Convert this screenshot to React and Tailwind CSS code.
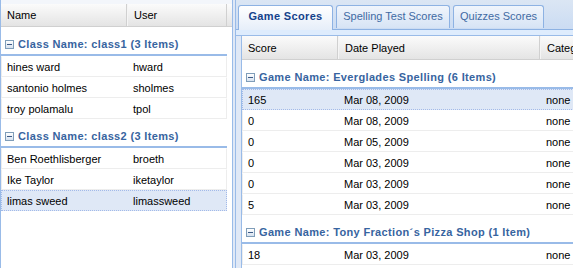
import React from "react";

function Sprite() {
  return (
    <span className="inline-flex h-[9px] w-[9px] items-center justify-center border border-[#7f9db9] bg-gradient-to-b from-white to-[#d6e1ef]">
      <span className="h-[1px] w-[5px] bg-[#3c5a86]" />
    </span>
  );
}

function GroupHeader({ label }) {
  return (
    <div className="pt-[6px] border-b-2 border-[#99bbe8]">
      <div className="flex h-[21px] items-center pl-[4px] pt-[1px]">
        <Sprite />
        <span className="ml-[4px] text-[11px] font-bold tracking-[0.35px] text-[#3764a0] whitespace-nowrap">
          {label}
        </span>
      </div>
    </div>
  );
}

function Row({ cells, widths, selected }) {
  return (
    <div
      className={
        "flex h-[21px] items-center border whitespace-nowrap pt-[2px] " +
        (selected
          ? "bg-[#dfe8f6] border-dotted border-[#a3bae9]"
          : "bg-white border-[#ededed] border-t-white")
      }
    >
      {cells.map((c, i) => (
        <div key={i} className={`pl-[5px] shrink-0 overflow-hidden ${widths[i]}`}>
          {c}
        </div>
      ))}
    </div>
  );
}

function HeaderCell({ children, className }) {
  return (
    <div
      className={`flex h-full items-center pl-[6px] pt-[1px] border-r border-[#d0d0d0] border-l border-l-[#f5f5f5] shrink-0 overflow-hidden whitespace-nowrap ${className}`}
    >
      {children}
    </div>
  );
}

export default function App() {
  const leftW = ["w-[126px]", "w-[98px]"];
  const rightW = ["w-[96px]", "w-[202px]", "w-[60px]"];
  return (
    <div className="flex h-[268px] w-[573px] overflow-hidden bg-[#dfe8f6] font-['Liberation_Sans',Arial,sans-serif] text-[11px] text-black">
      {/* Left panel */}
      <div className="flex w-[233px] shrink-0 flex-col border-x border-[#99bbe8] bg-white">
        <div className="h-[4px] bg-[#f3f6fb]" />
        <div className="flex h-[23px] border-b border-[#d0d0d0] bg-gradient-to-b from-[#fbfbfb] to-[#e4e4e4]">
          <HeaderCell className="w-[126px] border-l-0">Name</HeaderCell>
          <HeaderCell className="w-[100px]">User</HeaderCell>
        </div>
        <div className="w-[226px]">
          <GroupHeader label="Class Name: class1 (3 Items)" />
          <Row cells={["hines ward", "hward"]} widths={leftW} />
          <Row cells={["santonio holmes", "sholmes"]} widths={leftW} />
          <Row cells={["troy polamalu", "tpol"]} widths={leftW} />
          <GroupHeader label="Class Name: class2 (3 Items)" />
          <Row cells={["Ben Roethlisberger", "broeth"]} widths={leftW} />
          <Row cells={["Ike Taylor", "iketaylor"]} widths={leftW} />
          <Row cells={["limas sweed", "limassweed"]} widths={leftW} selected />
        </div>
      </div>

      {/* Right panel */}
      <div className="ml-[2px] flex min-w-0 flex-1 flex-col border-l border-[#99bbe8]">
        <div className="flex h-[30px] items-end gap-[3px] border-b border-[#8db2e3] bg-gradient-to-b from-[#dbe6f4] to-[#cbdcf3] pl-[2px]">
          <div className="-mb-[1px] flex h-[25px] w-[95px] items-start justify-center pt-[2px] rounded-t-[3px] border border-b-0 border-[#8db2e3] bg-gradient-to-b from-white to-[#e6eef9] font-bold tracking-[0.35px] text-[#15428b]">
            Game Scores
          </div>
          <div className="mb-[1px] flex h-[23px] w-[114px] items-start justify-center pt-[2px] rounded-t-[3px] border border-b-0 border-[#8db2e3] bg-gradient-to-b from-[#f0f5fc] to-[#d7e4f5] text-[#416aa3]">
            Spelling Test Scores
          </div>
          <div className="mb-[1px] flex h-[23px] w-[91px] items-start justify-center pt-[2px] rounded-t-[3px] border border-b-0 border-[#8db2e3] bg-gradient-to-b from-[#f0f5fc] to-[#d7e4f5] text-[#416aa3]">
            Quizzes Scores
          </div>
        </div>
        <div className="h-[6px] border-b border-[#99bbe8] bg-[#deecfd]" />
        <div className="flex min-h-0 flex-1 pl-[5px]">
          <div className="flex-1 border-l border-[#99bbe8] bg-white">
            <div className="flex h-[24px] border-b border-[#d0d0d0] bg-gradient-to-b from-[#fbfbfb] to-[#e4e4e4]">
              <HeaderCell className="w-[96px] border-l-0">Score</HeaderCell>
              <HeaderCell className="w-[202px]">Date Played</HeaderCell>
              <HeaderCell className="w-[60px]">Category</HeaderCell>
            </div>
            <GroupHeader label="Game Name: Everglades Spelling (6 Items)" />
            <Row cells={["165", "Mar 08, 2009", "none"]} widths={rightW} selected />
            <Row cells={["0", "Mar 08, 2009", "none"]} widths={rightW} />
            <Row cells={["0", "Mar 05, 2009", "none"]} widths={rightW} />
            <Row cells={["0", "Mar 03, 2009", "none"]} widths={rightW} />
            <Row cells={["0", "Mar 03, 2009", "none"]} widths={rightW} />
            <Row cells={["5", "Mar 03, 2009", "none"]} widths={rightW} />
            <GroupHeader label="Game Name: Tony Fraction´s Pizza Shop (1 Item)" />
            <Row cells={["18", "Mar 03, 2009", "none"]} widths={rightW} />
          </div>
        </div>
      </div>
    </div>
  );
}
